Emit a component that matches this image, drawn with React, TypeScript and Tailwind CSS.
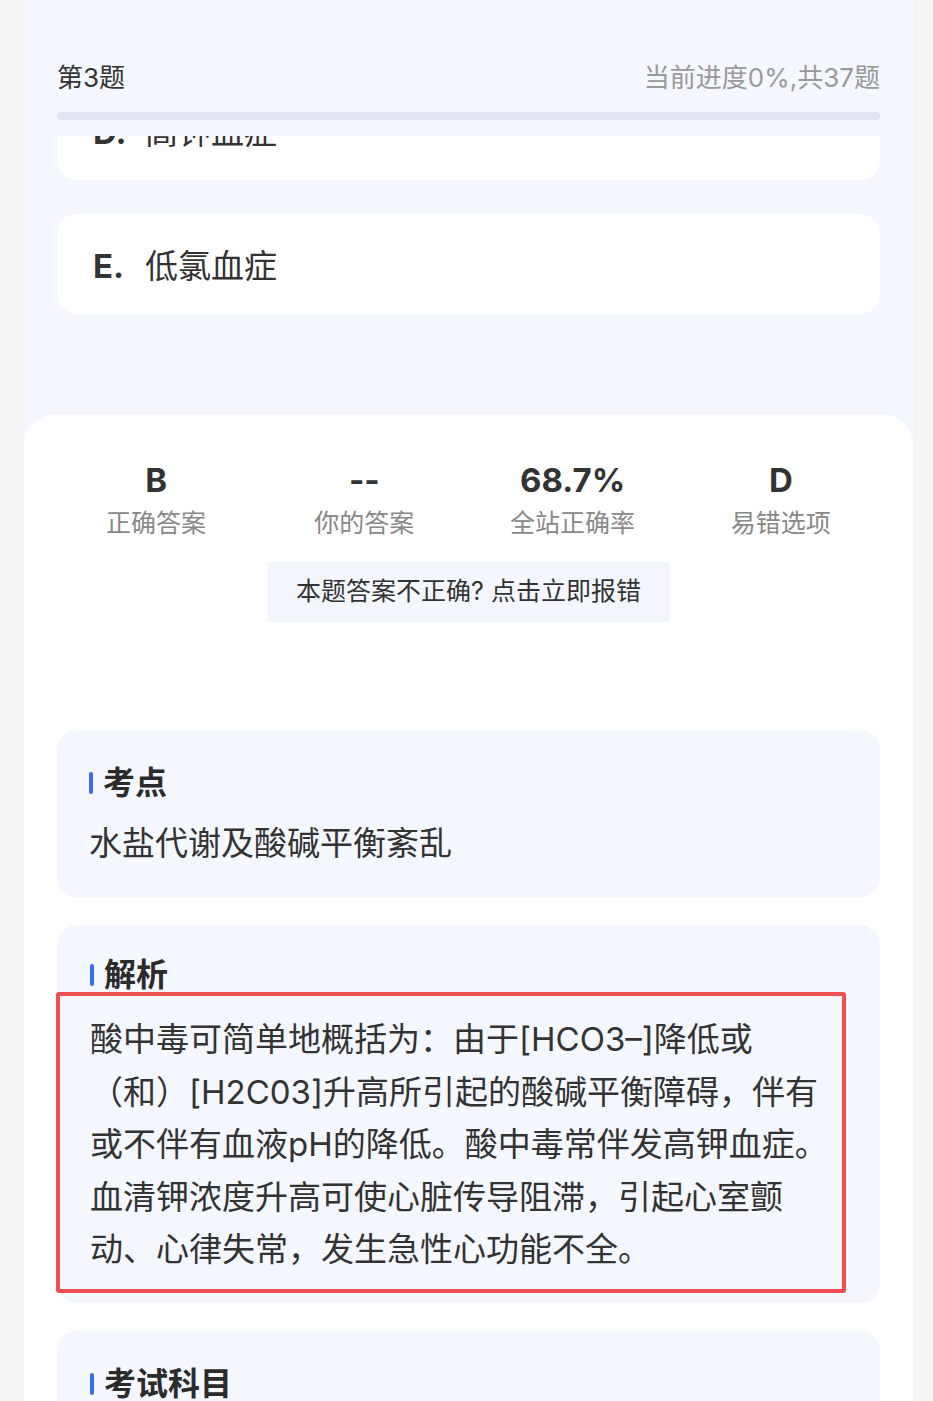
const FONT = 'font-["Inter","Noto_Sans_CJK_SC",sans-serif]';

const STATS = [
  { value: "B", label: "正确答案" },
  { value: "--", label: "你的答案" },
  { value: "68.7%", label: "全站正确率" },
  { value: "D", label: "易错选项" },
];

const EXPLAIN =
  "酸中毒可简单地概括为：由于[HCO3–]降低或（和）[H2C03]升高所引起的酸碱平衡障碍，伴有或不伴有血液pH的降低。酸中毒常伴发高钾血症。血清钾浓度升高可使心脏传导阻滞，引起心室颤动、心律失常，发生急性心功能不全。";

function SectionTitle({ children }: { children: string }) {
  return (
    <div className="flex items-center gap-[10px]">
      <span className="h-[22px] w-[4px] rounded-full bg-[#3a6df0]" />
      <span className="text-[32px] font-bold leading-[40px] text-[#2b2b2b]">
        {children}
      </span>
    </div>
  );
}

function OptionCard({ letter, text }: { letter: string; text: string }) {
  return (
    <div className="flex h-[100px] shrink-0 items-center rounded-[20px] bg-white px-[36px] pt-[4px]">
      <span className="w-[52px] text-[33px] font-bold leading-[44px] text-[#333]">
        {letter}.
      </span>
      <span className="text-[33px] leading-[44px] text-[#333]">{text}</span>
    </div>
  );
}

export default function App() {
  return (
    <div className={`min-h-[1401px] bg-[#f5f5f5] ${FONT}`}>
      <div className="mx-[24px] w-[889px] bg-[#f4f7fe]">
        <div className="px-[33px]">
          <div className="flex items-center justify-between pt-[63px]">
            <span className="text-[26px] leading-[30px] text-[#333]">第3题</span>
            <span className="text-[26px] leading-[30px] text-[#999]">
              当前进度0%,共37题
            </span>
          </div>
          <div className="mt-[19px] h-[8px] rounded-sm bg-[#e2e5ef]" />

          {/* option D scrolled under the sticky header */}
          <div className="mt-[16px] flex h-[44px] flex-col justify-end overflow-hidden">
            <OptionCard letter="D" text="高钾血症" />
          </div>
          <div className="mt-[34px]">
            <OptionCard letter="E" text="低氯血症" />
          </div>
        </div>

        <div className="mt-[101px] rounded-t-[30px] bg-white pb-[40px]">
          <div className="grid grid-cols-4 px-[28px] pt-[45px]">
            {STATS.map((s) => (
              <div key={s.label} className="flex flex-col items-center">
                <span className="text-[33px] font-bold leading-[40px] text-[#333]">
                  {s.value}
                </span>
                <span className="mt-[8px] text-[25px] leading-[30px] text-[#888]">
                  {s.label}
                </span>
              </div>
            ))}
          </div>

          <div className="mt-[24px] flex justify-center">
            <button
              type="button"
              className="flex h-[60px] w-[403px] items-center justify-center rounded-[4px] bg-[#f3f6fd] text-[25px] text-[#333]"
            >
              本题答案不正确? 点击立即报错
            </button>
          </div>

          <div className="mt-[108px] flex flex-col gap-[28px] px-[33px]">
            <div className="rounded-[20px] bg-[#f4f7fe] px-[32px] pb-[32px] pt-[33px]">
              <SectionTitle>考点</SectionTitle>
              <p className="mt-[18px] text-[33px] leading-[44px] text-[#333]">
                水盐代谢及酸碱平衡紊乱
              </p>
            </div>

            <div className="relative rounded-[20px] bg-[#f4f7fe] px-[33px] pb-[27px] pt-[30px]">
              <SectionTitle>解析</SectionTitle>
              <p className="mt-[18px] w-[745px] text-[33px] leading-[52.5px] text-[#333]">
                {EXPLAIN}
              </p>
              {/* red highlight frame */}
              <div className="pointer-events-none absolute left-[-1px] top-[67px] h-[301px] w-[790px] rounded-[3px] border-[4px] border-[#ef4f50]" />
            </div>

            <div className="rounded-[20px] bg-[#f4f7fe] px-[33px] pb-[32px] pt-[33px]">
              <SectionTitle>考试科目</SectionTitle>
              <p className="mt-[18px] text-[33px] leading-[44px] text-[#333]">
                外科学
              </p>
            </div>
          </div>
        </div>
      </div>
    </div>
  );
}
